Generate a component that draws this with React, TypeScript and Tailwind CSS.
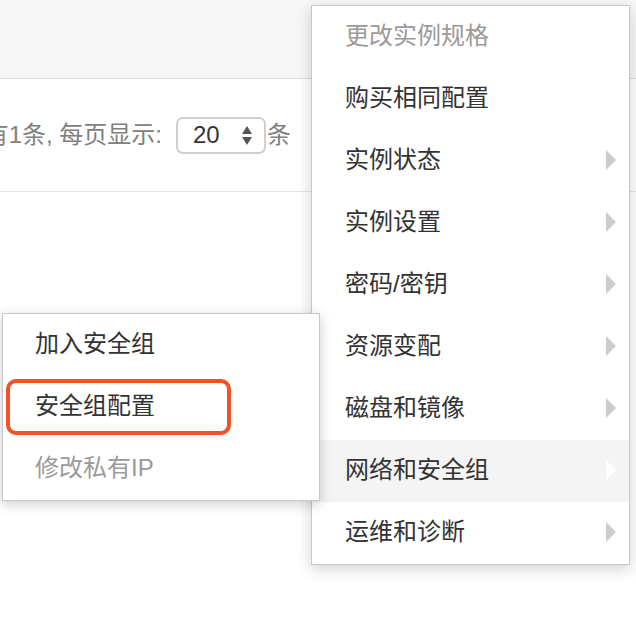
import React from 'react';

const font = { fontFamily: '"Liberation Sans", "Noto Sans CJK SC", sans-serif' };

type Item = { label: string; disabled?: boolean; arrow?: boolean; active?: boolean };

const mainItems: Item[] = [
  { label: '更改实例规格', disabled: true },
  { label: '购买相同配置' },
  { label: '实例状态', arrow: true },
  { label: '实例设置', arrow: true },
  { label: '密码/密钥', arrow: true },
  { label: '资源变配', arrow: true },
  { label: '磁盘和镜像', arrow: true },
  { label: '网络和安全组', arrow: true, active: true },
  { label: '运维和诊断', arrow: true },
];

const Arrow = ({ active }: { active?: boolean }) => (
  <span
    className={`ml-auto mr-[13px] h-0 w-0 border-y-[10px] border-l-[10px] border-y-transparent ${
      active ? 'border-l-white' : 'border-l-[#cccccc]'
    }`}
  />
);

const MainMenu = () => (
  <div className="absolute left-[311px] top-[5px] w-[319px] border border-[#c8c8c8] bg-white shadow-[0_4px_14px_rgba(0,0,0,0.18)]">
    {mainItems.map((item) => (
      <div
        key={item.label}
        className={`flex h-[62px] items-center pb-[2px] pl-[33px] text-[24px] ${
          item.active ? 'bg-[#f4f4f4]' : ''
        } ${item.disabled ? 'text-[#9a9a9a]' : 'text-[#333333]'}`}
      >
        <span>{item.label}</span>
        {item.arrow && <Arrow active={item.active} />}
      </div>
    ))}
  </div>
);

const SubMenu = () => (
  <div className="absolute left-[2px] top-[313px] w-[318px] border border-[#c8c8c8] bg-white shadow-[0_3px_12px_rgba(0,0,0,0.2)]">
    <div className="flex h-[62px] items-center pb-[3px] pl-[32px] text-[24px] text-[#333333]">加入安全组</div>
    <div className="flex h-[62px] items-center pl-[3px] text-[24px] text-[#333333]">
      <div className="flex h-[56px] w-[225px] items-center rounded-[10px] border-4 border-[#f05327] pb-[2px] pl-[25px]">
        安全组配置
      </div>
    </div>
    <div className="flex h-[62px] items-center pb-[3px] pl-[32px] text-[24px] text-[#9a9a9a]">修改私有IP</div>
  </div>
);

const Pager = () => (
  <div className="flex h-[113px] items-center border-b border-[#e6e6e6] text-[24px] text-[#808080]">
    <div className="flex w-[162px] justify-end overflow-hidden whitespace-nowrap">
      <span className="shrink-0">有1条, 每页显示:</span>
    </div>
    <div className="ml-[14px] flex h-[37px] w-[90px] items-center rounded-[7px] border-2 border-[#cfcfcf] pl-[15px] text-[#333333]">
      <span>20</span>
      <span className="ml-auto mr-[12px] flex flex-col gap-[3px]">
        <span className="h-0 w-0 border-x-[5px] border-b-[8px] border-x-transparent border-b-[#555555]" />
        <span className="h-0 w-0 border-x-[5px] border-t-[8px] border-x-transparent border-t-[#555555]" />
      </span>
    </div>
    <span className="ml-px">条</span>
  </div>
);

export default function App() {
  return (
    <div className="relative h-[626px] w-[636px] overflow-hidden bg-white" style={font}>
      <div className="h-[79px] border-b border-[#d8d8d8] bg-[#f7f7f7]" />
      <Pager />
      <MainMenu />
      <SubMenu />
    </div>
  );
}
